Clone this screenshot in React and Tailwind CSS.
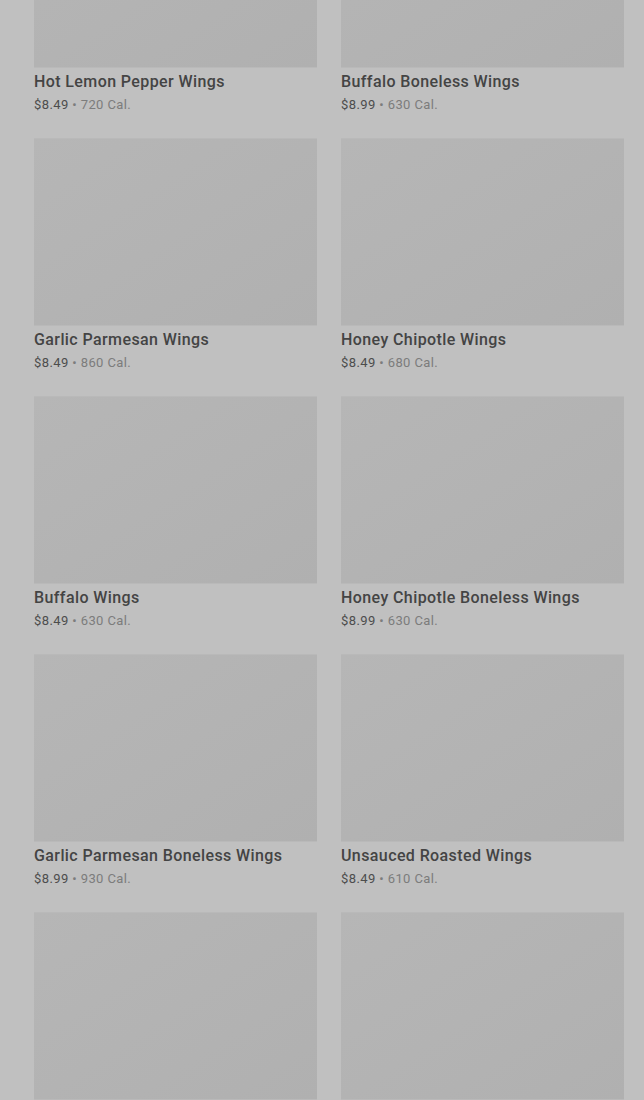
const items = [
    { name: "Hot Lemon Pepper Wings", price: "$8.49", cal: "720 Cal." },
    { name: "Buffalo Boneless Wings", price: "$8.99", cal: "630 Cal." },
    { name: "Garlic Parmesan Wings", price: "$8.49", cal: "860 Cal." },
    { name: "Honey Chipotle Wings", price: "$8.49", cal: "680 Cal." },
    { name: "Buffalo Wings", price: "$8.49", cal: "630 Cal." },
    { name: "Honey Chipotle Boneless Wings", price: "$8.99", cal: "630 Cal." },
    { name: "Garlic Parmesan Boneless Wings", price: "$8.99", cal: "930 Cal." },
    { name: "Unsauced Roasted Wings", price: "$8.49", cal: "610 Cal." },
    { id: "loading-1" },
    { id: "loading-2" },
];

function MenuCard({ item }) {
    return (
        <div className="flex flex-col">
            <div className="h-[188px] w-full bg-gradient-to-br from-[#b6b6b6] to-[#b0b0b0] border-y border-[#b9b9b9]" />
            {item.name && (
                <>
                    <h3 className="mt-1 text-[16px] leading-5 font-medium text-[#444444] tracking-[0.4px]">
                        {item.name}
                    </h3>
                    <p className="mt-1 text-[13px] leading-[18px] text-[#4d4d4d] tracking-[0.4px]">
                        {item.price}
                        <span className="text-[#7c7c7c]"> • {item.cal}</span>
                    </p>
                </>
            )}
        </div>
    );
}

export default function App() {
    return (
        <div
            className="min-h-screen h-[1100px] overflow-hidden bg-[#c0c0c0]"
            style={{ fontFamily: "Roboto, 'Noto Sans', sans-serif" }}
        >
            <div className="-mt-[120px] pl-[34px] pr-[20px] grid grid-cols-2 gap-x-6 gap-y-6">
                {items.map((item) => (
                    <MenuCard key={item.name || item.id} item={item} />
                ))}
            </div>
        </div>
    );
}
